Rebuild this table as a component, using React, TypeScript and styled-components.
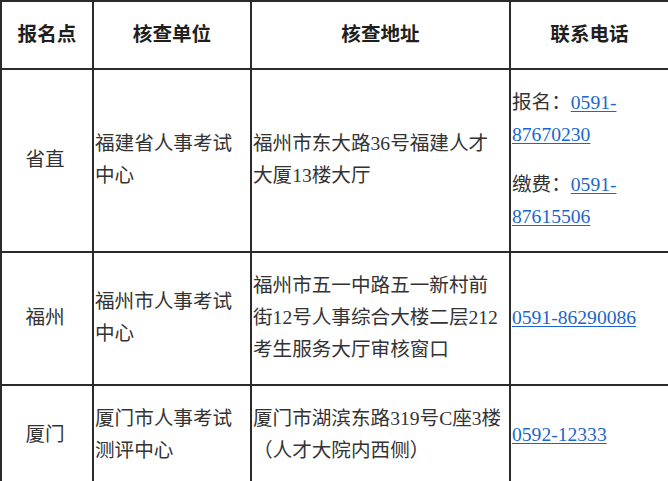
import React from 'react'
import styled, { createGlobalStyle } from 'styled-components'

const GlobalStyle = createGlobalStyle`
  html, body {
    margin: 0;
    padding: 0;
    background: #ffffff;
  }
`

const Table = styled.table`
  width: 668px;
  border-collapse: collapse;
  table-layout: fixed;
  font-family: 'Liberation Serif', 'Noto Sans CJK SC', serif;
  font-size: 19.6px;
  line-height: 32px;
  color: #333333;
`

const HeadCell = styled.th`
  border: 2px solid #2b2b2b;
  padding: 17px 1px;
  font-weight: 700;
  color: #1f1f1f;
  text-align: center;
  vertical-align: middle;
`

const Cell = styled.td<{ $center?: boolean }>`
  border: 2px solid #2b2b2b;
  padding: 17px 5px 18px 1px;
  text-align: ${(p) => (p.$center ? 'center' : 'left')};
  vertical-align: middle;
`

const PhoneLine = styled.p`
  margin: 0;
  & + & {
    margin-top: 18px;
  }
`

const PhoneLink = styled.a`
  color: #1a66cc;
  text-decoration: underline;
  text-underline-offset: 2px;
`

type Site = {
  name: string
  unit: string
  address: string
  phones: { label?: string; head: string; tail?: string }[]
}

const sites: Site[] = [
  {
    name: '省直',
    unit: '福建省人事考试中心',
    address: '福州市东大路36号福建人才大厦13楼大厅',
    phones: [
      { label: '报名：', head: '0591-', tail: '87670230' },
      { label: '缴费：', head: '0591-', tail: '87615506' },
    ],
  },
  {
    name: '福州',
    unit: '福州市人事考试中心',
    address: '福州市五一中路五一新村前街12号人事综合大楼二层212考生服务大厅审核窗口',
    phones: [{ head: '0591-86290086' }],
  },
  {
    name: '厦门',
    unit: '厦门市人事考试测评中心',
    address: '厦门市湖滨东路319号C座3楼（人才大院内西侧）',
    phones: [{ head: '0592-12333' }],
  },
]

export default function App() {
  return (
    <>
      <GlobalStyle />
      <Table>
        <colgroup>
          <col style={{ width: 92 }} />
          <col style={{ width: 158 }} />
          <col style={{ width: 259 }} />
          <col style={{ width: 159 }} />
        </colgroup>
        <thead>
          <tr>
            <HeadCell>报名点</HeadCell>
            <HeadCell>核查单位</HeadCell>
            <HeadCell>核查地址</HeadCell>
            <HeadCell>联系电话</HeadCell>
          </tr>
        </thead>
        <tbody>
          {sites.map((site) => (
            <tr key={site.name}>
              <Cell $center>{site.name}</Cell>
              <Cell>{site.unit}</Cell>
              <Cell>{site.address}</Cell>
              <Cell>
                {site.phones.map((ph, i) => (
                  <PhoneLine key={i}>
                    {ph.label}
                    <PhoneLink href="#">
                      {ph.head}
                      {ph.tail && <wbr />}
                      {ph.tail}
                    </PhoneLink>
                  </PhoneLine>
                ))}
              </Cell>
            </tr>
          ))}
        </tbody>
      </Table>
    </>
  )
}
